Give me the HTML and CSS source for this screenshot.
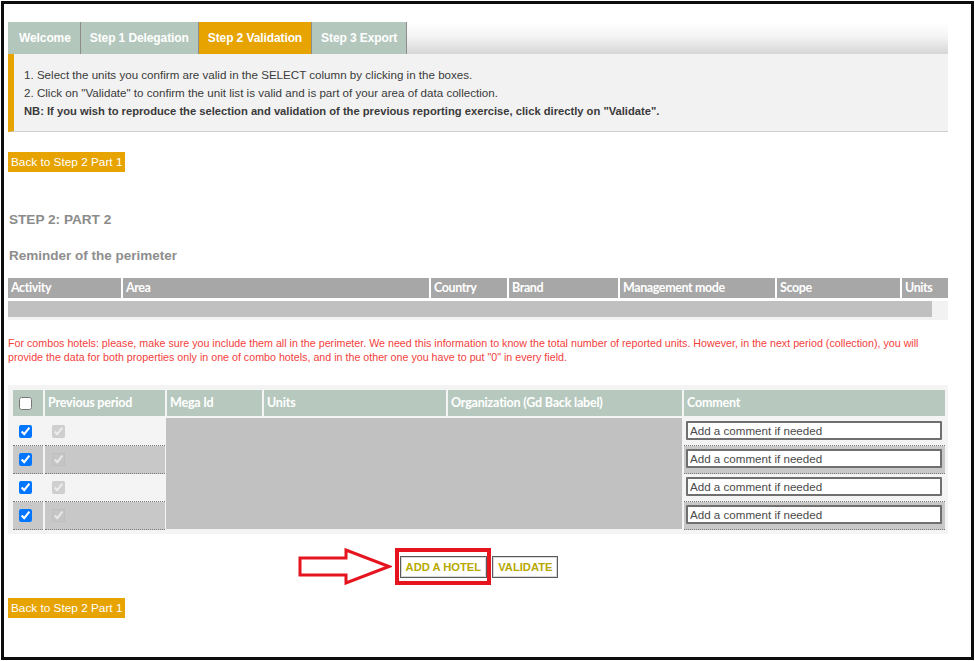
FILE: index.html
```html
<!DOCTYPE html>
<html>
<head>
<meta charset="utf-8">
<title>Step 2 Validation</title>
<link rel="stylesheet" href="styles.css">
</head>
<body>
<div class="frame">
  <div class="page">
    <nav class="tabs">
      <span class="tab">Welcome</span>
      <span class="tab">Step 1 Delegation</span>
      <span class="tab active">Step 2 Validation</span>
      <span class="tab">Step 3 Export</span>
    </nav>
    <div class="info">
      <p>1. Select the units you confirm are valid in the SELECT column by clicking in the boxes.</p>
      <p>2. Click on "Validate" to confirm the unit list is valid and is part of your area of data collection.</p>
      <p class="nb">NB: If you wish to reproduce the selection and validation of the previous reporting exercise, click directly on "Validate".</p>
    </div>

    <button class="back back-top">Back to Step 2 Part 1</button>

    <h2 class="step">STEP 2: PART 2</h2>
    <h3 class="reminder">Reminder of the perimeter</h3>

    <div class="perimeter">
      <div class="p-head">
        <span class="p-cell">Activity</span>
        <span class="p-cell">Area</span>
        <span class="p-cell">Country</span>
        <span class="p-cell">Brand</span>
        <span class="p-cell">Management mode</span>
        <span class="p-cell">Scope</span>
        <span class="p-cell">Units</span>
      </div>
      <div class="p-row"><div class="p-fill"></div></div>
    </div>

    <p class="warn">
      <span class="warn-line">For combos hotels: please, make sure you include them all in the perimeter. We need this information to know the total number of reported units. However, in the next period (collection), you will</span>
      <span class="warn-line">provide the data for both properties only in one of combo hotels, and in the other one you have to put "0" in every field.</span>
    </p>

    <div class="units">
      <div class="units-grid">
        <div class="h-cell h-cb"><input type="checkbox" class="cb"></div>
        <div class="h-cell">Previous period</div>
        <div class="h-cell">Mega Id</div>
        <div class="h-cell">Units</div>
        <div class="h-cell">Organization (Gd Back label)</div>
        <div class="h-cell">Comment</div>

        <div class="masked"></div>

        <div class="c-cell cb-cell r1 col1"><input type="checkbox" class="cb" checked></div>
        <div class="c-cell cb-cell prev r1 col2"><input type="checkbox" class="cb" checked disabled></div>
        <div class="c-cell cm-cell r1 col6"><input type="text" class="comment" placeholder="Add a comment if needed"></div>

        <div class="c-cell cb-cell alt r2 col1"><input type="checkbox" class="cb" checked></div>
        <div class="c-cell cb-cell prev alt r2 col2"><input type="checkbox" class="cb" checked disabled></div>
        <div class="c-cell cm-cell alt r2 col6"><input type="text" class="comment" placeholder="Add a comment if needed"></div>

        <div class="c-cell cb-cell r3 col1"><input type="checkbox" class="cb" checked></div>
        <div class="c-cell cb-cell prev r3 col2"><input type="checkbox" class="cb" checked disabled></div>
        <div class="c-cell cm-cell r3 col6"><input type="text" class="comment" placeholder="Add a comment if needed"></div>

        <div class="c-cell cb-cell alt r4 col1"><input type="checkbox" class="cb" checked></div>
        <div class="c-cell cb-cell prev alt r4 col2"><input type="checkbox" class="cb" checked disabled></div>
        <div class="c-cell cm-cell alt r4 col6"><input type="text" class="comment" placeholder="Add a comment if needed"></div>
      </div>
    </div>

    <div class="actions">
      <span class="hl-wrap">
        <svg class="arrow" width="94" height="37" viewBox="0 0 94 37">
          <path d="M2 10 H48 V2 L91 18.5 L48 35 V27 H2 Z" fill="#fff" stroke="#e5141f" stroke-width="3" stroke-linejoin="miter"/>
        </svg>
        <button class="act">ADD A HOTEL</button>
        <span class="hl"></span>
      </span>
      <button class="act">VALIDATE</button>
    </div>

    <button class="back back-bottom">Back to Step 2 Part 1</button>
  </div>
</div>
</body>
</html>
```
FILE: styles.css
```css
* { box-sizing: border-box; }

html, body {
  margin: 0;
  padding: 0;
  background: #fff;
}

body {
  font-family: "Liberation Sans", Arial, sans-serif;
  color: #333;
}

.frame {
  margin: 1px 0 0 1px;
  width: 973px;
  height: 659px;
  border: 3px solid #0d0d0d;
  overflow: hidden;
}

.page {
  padding: 18px 0 0 4px;
  width: 944px;
}

/* Tabs */
.tabs {
  display: flex;
  height: 32px;
  background: linear-gradient(#ffffff 0%, #f4f4f4 45%, #d6d6d6 100%);
}

.tab {
  display: flex;
  align-items: center;
  padding: 0 9px;
  background: #b4c7bd;
  color: #fff;
  font-weight: bold;
  font-size: 12px;
  letter-spacing: -0.1px;
  border-right: 1px solid #8d8d8d;
}

.tab:first-child { padding: 0 9px 0 11px; }

.tab.active { background: #e7a300; }

/* Info box */
.info {
  background: #f2f2f2;
  border-left: 6px solid #e7a300;
  border-bottom: 1px solid #cfcfcf;
  padding: 12px 0 11px 10px;
}

.info p {
  margin: 0;
  font-size: 11.6px;
  line-height: 18px;
  color: #3a3a3a;
}

.info p.nb {
  font-weight: bold;
  font-size: 11.2px;
}

/* Back buttons */
.back {
  display: block;
  height: 20px;
  padding: 0 3px;
  border: none;
  background: #e7a300;
  color: #fff;
  font-family: "Liberation Sans", Arial, sans-serif;
  font-size: 11.8px;
  line-height: 20px;
}

.back-top { margin-top: 20px; }
.back-bottom { margin-top: 20px; }

/* Headings */
.step {
  margin: 40px 0 0 1px;
  font-size: 13.6px;
  line-height: 15px;
  font-weight: bold;
  color: #8b8b8b;
}

.reminder {
  margin: 21px 0 0 1px;
  font-size: 13.5px;
  line-height: 16px;
  font-weight: bold;
  color: #8e8e8e;
}

/* Perimeter table */
.perimeter {
  margin-top: 14px;
  width: 940px;
}

.p-head {
  display: grid;
  grid-template-columns: 113px 306px 76px 109px 155px 123px 46px;
  column-gap: 2px;
}

.p-cell {
  height: 20px;
  line-height: 20px;
  padding-left: 3px;
  background: #a7a7a7;
  color: #fff;
  font-family: Lato, "Liberation Sans", sans-serif;
  font-weight: bold;
  font-size: 12.5px;
  letter-spacing: -0.4px;
}

.p-row {
  margin-top: 3px;
  height: 19px;
  background: #f2f2f2;
}

.p-fill {
  width: 924px;
  height: 16px;
  background: #c0c0c0;
}

/* Warning */
.warn {
  margin: 16px 0 0 0;
  color: #f2413c;
  font-size: 10.7px;
  line-height: 14px;
}

.warn-line {
  display: block;
  white-space: nowrap;
}

/* Units table */
.units {
  margin-top: 21px;
  width: 940px;
  background: #f4f4f4;
  padding: 5px 3px 4px 5px;
}

.units-grid {
  display: grid;
  grid-template-columns: 30px 120px 95px 182px 234px 261px;
  grid-template-rows: 28px repeat(4, 28px);
  column-gap: 2px;
}

.h-cell {
  height: 26px;
  line-height: 26px;
  padding-left: 3px;
  background: #b7c9be;
  color: #fff;
  font-family: Lato, "Liberation Sans", sans-serif;
  font-weight: bold;
  font-size: 12.5px;
  letter-spacing: -0.2px;
}

.h-cb {
  display: flex;
  align-items: center;
  padding-left: 6px;
}

.masked {
  grid-column: 3 / 6;
  grid-row: 2 / 6;
  margin-left: -1px;
  margin-bottom: 1px;
  background: #c1c1c1;
}

.c-cell {
  height: 28px;
  border-bottom: 1px dotted #7a7a7a;
}

.c-cell.alt { background: #c8c8c8; }

.r1 { grid-row: 2; }
.r2 { grid-row: 3; }
.r3 { grid-row: 4; }
.r4 { grid-row: 5; }
.col1 { grid-column: 1; }
.col2 { grid-column: 2; }
.col6 { grid-column: 6; }

.cb-cell {
  display: flex;
  align-items: center;
  padding-left: 6px;
}

.cb-cell.prev { padding-left: 7px; }

.cb {
  margin: 0;
  width: 13px;
  height: 13px;
}

.cm-cell {
  padding: 3px 3px 0 2px;
}

.comment {
  display: block;
  width: 100%;
  height: 19px;
  margin: 0;
  padding: 0 2px;
  border: 2px solid #6f6f6f;
  border-radius: 1px;
  background: #fff;
  font-family: "Liberation Sans", Arial, sans-serif;
  font-size: 11.6px;
  color: #444;
}

.comment::placeholder { color: #4a4a4a; opacity: 1; }

/* Actions */
.actions {
  margin-top: 22px;
  display: flex;
  justify-content: center;
  gap: 5px;
  padding-left: 2px;
}

.hl-wrap {
  position: relative;
  display: inline-flex;
}

.act {
  height: 22px;
  padding: 0 5px;
  background: #fff;
  border: 1px solid #5a5a5a;
  box-shadow: inset 0 0 0 1px #d8d8d8;
  color: #b7a800;
  font-family: "Liberation Sans", Arial, sans-serif;
  font-weight: bold;
  font-size: 11.2px;
}

.hl {
  position: absolute;
  left: -5px;
  top: -8px;
  width: 96px;
  height: 37px;
  border: 4px solid #e5141f;
}

.arrow {
  position: absolute;
  left: -102px;
  top: -8px;
}
```
